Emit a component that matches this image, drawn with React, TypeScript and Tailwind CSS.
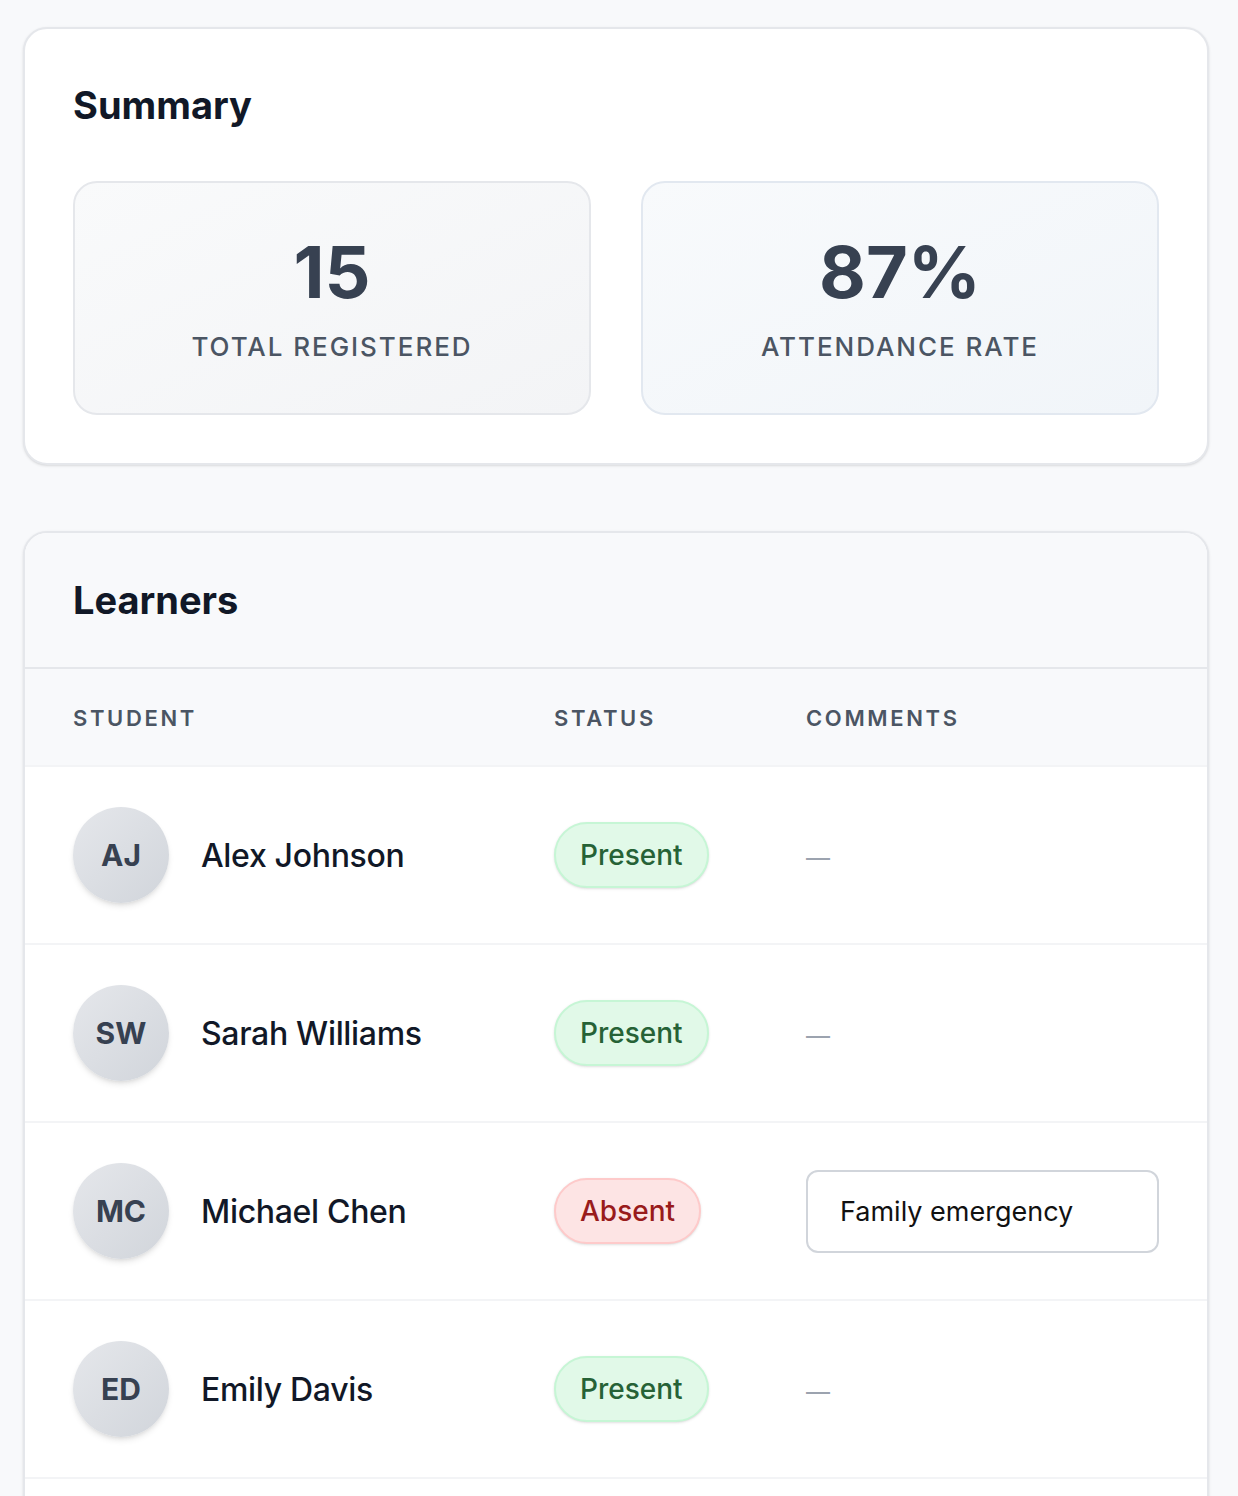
import React from 'react';

type Status = 'Present' | 'Absent';

interface Learner {
  initials: string;
  name: string;
  status: Status;
  comment?: string;
}

const learners: Learner[] = [
  { initials: 'AJ', name: 'Alex Johnson', status: 'Present' },
  { initials: 'SW', name: 'Sarah Williams', status: 'Present' },
  { initials: 'MC', name: 'Michael Chen', status: 'Absent', comment: 'Family emergency' },
  { initials: 'ED', name: 'Emily Davis', status: 'Present' },
];

function StatCard({ value, label, slate }: { value: string; label: string; slate?: boolean }) {
  return (
    <div
      className={
        slate
          ? 'rounded-3xl border-2 border-[#e2e8f0] bg-gradient-to-br from-[#f8fafc] to-[#f1f5f9] p-12 text-center'
          : 'rounded-3xl border-2 border-[#e5e7eb] bg-gradient-to-br from-[#f9fafb] to-[#f3f4f6] p-12 text-center'
      }
    >
      <div className="text-[72px] font-bold leading-[82px] text-[#374151]">{value}</div>
      <div className="mt-4 text-[26px] font-medium uppercase leading-[36px] tracking-[0.075em] text-[#4b5563]">
        {label}
      </div>
    </div>
  );
}

function StatusPill({ status }: { status: Status }) {
  if (status === 'Absent') {
    return (
      <span className="inline-block rounded-full border-2 border-[#fecaca] bg-[#fde4e4] px-[24px] py-[13px] text-[28px] font-medium leading-[36px] text-[#991b1b] shadow-sm">
        Absent
      </span>
    );
  }
  return (
    <span className="inline-block rounded-full border-2 border-[#c6f6d5] bg-[#e1f9e8] px-[24px] py-[13px] text-[28px] font-medium leading-[36px] text-[#266236] shadow-sm">
      Present
    </span>
  );
}

export default function App() {
  return (
    <div
      className="min-h-screen bg-[#f8f9fb] pl-[23px] pr-[29px] pt-[27px] pb-10"
      style={{ fontFamily: 'Inter, "Noto Sans", sans-serif' }}
    >
      {/* Summary */}
      <section className="rounded-3xl border-2 border-[#e5e7eb] bg-white p-12 shadow-sm">
        <h2 className="mb-12 text-[38px] font-bold leading-[56px] text-[#111827]">Summary</h2>
        <div className="grid grid-cols-2 gap-[50px]">
          <StatCard value="15" label="Total Registered" />
          <StatCard value="87%" label="Attendance Rate" slate />
        </div>
      </section>

      {/* Learners */}
      <section className="mt-[66px] overflow-hidden rounded-3xl border-2 border-[#e5e7eb] bg-white shadow-sm">
        <div className="border-b-2 border-[#e5e7eb] bg-[#f8f9fb] p-12">
          <h2 className="text-[38px] font-bold leading-[38px] text-[#111827]">Learners</h2>
        </div>

        <div className="grid h-[98px] grid-cols-[481px_252px_1fr] items-center border-b-2 border-[#f3f4f6] bg-[#f8f9fb] pt-[3px] text-[22px] font-semibold uppercase tracking-[0.12em] text-[#4b5563]">
          <div className="px-12">Student</div>
          <div className="px-12">Status</div>
          <div className="px-12">Comments</div>
        </div>

        {learners.map((l) => (
          <div
            key={l.name}
            className="grid grid-cols-[481px_252px_1fr] items-center border-b-2 border-[#f3f4f6] py-10"
          >
            <div className="flex items-center gap-8 px-12">
              <div className="flex h-24 w-24 shrink-0 items-center justify-center rounded-full bg-gradient-to-br from-[#e5e7eb] to-[#d1d5db] text-[30px] font-bold text-[#374151] shadow-md">
                {l.initials}
              </div>
              <span className="pt-[2px] text-[32px] font-medium tracking-[-0.01em] text-[#111827]">
                {l.name}
              </span>
            </div>
            <div className="px-12">
              <StatusPill status={l.status} />
            </div>
            <div className="px-12">
              {l.comment ? (
                <input
                  defaultValue={l.comment}
                  className="h-[83px] w-full rounded-xl border-2 border-[#d1d5db] bg-white px-8 text-[27px] text-[#111111] outline-none"
                />
              ) : (
                <span className="inline-block pt-[5px] text-[24px] text-[#9ca3af]">—</span>
              )}
            </div>
          </div>
        ))}

        {/* next rows continue below the fold */}
        <div className="h-24 bg-white" />
      </section>
    </div>
  );
}
